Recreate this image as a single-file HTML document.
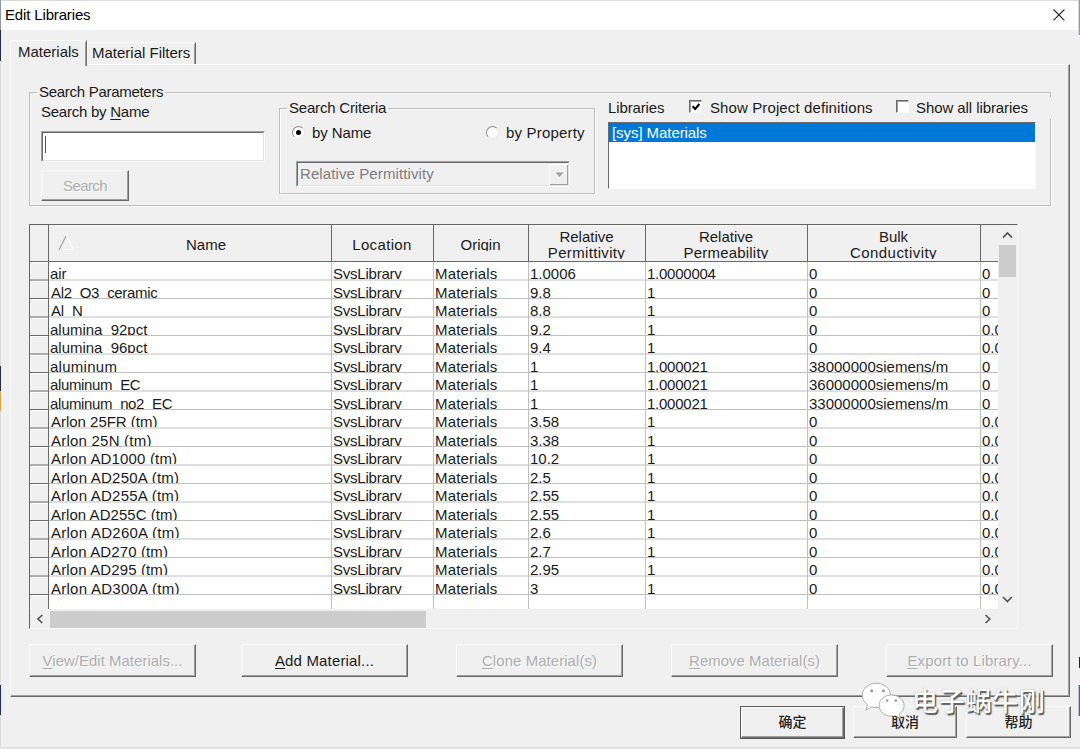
<!DOCTYPE html>
<html lang="en"><head><meta charset="utf-8"><title>Edit Libraries</title>
<style>
*{box-sizing:border-box;margin:0;padding:0}
html,body{width:1080px;height:749px;overflow:hidden;background:#f0f0f0}
body{position:relative;font-family:"Liberation Sans","Noto Sans CJK SC",sans-serif;font-size:15px;color:#1a1a1a;line-height:18px}
.abs,.t{position:absolute;white-space:nowrap}
.titlebar{position:absolute;left:0;top:0;width:1080px;height:30px;background:#fff;border-top:1px solid #d9d9d9}
.title{position:absolute;left:5px;top:5px;font-size:15px;color:#000}
.closex{position:absolute;left:1052px;top:7px}
.edge{position:absolute}
/* tab control */
.tabpanel{position:absolute;left:10px;top:64px;width:1060px;height:633px;border-left:1px solid #fff;border-top:1px solid #fff;border-right:1px solid #696969;border-bottom:1px solid #696969}
.tabpanel:after{content:"";position:absolute;left:0;top:0;right:0;bottom:0;border-right:1px solid #a0a0a0;border-bottom:1px solid #a0a0a0}
.tab{position:absolute;background:#f0f0f0;border-left:1px solid #fff;border-top:1px solid #fff;border-right:1px solid #696969;white-space:nowrap}
.tab i{position:absolute;right:0;top:1px;bottom:0;width:1px;background:#a0a0a0}
.tab1{left:10px;top:40px;width:77px;height:26px;z-index:2;padding:2px 0 0 7px}
.tab2{left:87px;top:42px;width:109px;height:22px;padding:1px 0 0 4px}
/* group boxes */
.group{position:absolute;border:1px solid #bdbdbd;box-shadow:1px 1px 0 #fbfbfb,inset 1px 1px 0 #fbfbfb}
.glabel{position:absolute;background:#f0f0f0;padding:0 2px;white-space:nowrap}
/* inputs */
.sunken{position:absolute;background:#fff;border-top:1px solid #a0a0a0;border-left:1px solid #a0a0a0;border-right:1px solid #fff;border-bottom:1px solid #fff}
.sunken:after{content:"";position:absolute;left:0;top:0;right:0;bottom:0;border-top:1px solid #696969;border-left:1px solid #696969;border-right:1px solid #e3e3e3;border-bottom:1px solid #e3e3e3}
.btn{position:absolute;background:#f0f0f0;border-top:1px solid #fff;border-left:1px solid #fff;border-right:1px solid #696969;border-bottom:1px solid #696969;text-align:center;white-space:nowrap}
.btn:after{content:"";position:absolute;left:0;top:0;right:0;bottom:0;border-right:1px solid #a0a0a0;border-bottom:1px solid #a0a0a0}
.btn span{position:relative;display:inline-block}
.btn.dis{color:#adadad;text-shadow:1px 1px 0 #fff}
u{text-decoration:underline;text-underline-offset:2px}
.radio{position:absolute;width:13px;height:13px;border-radius:50%;background:#fff;border:1px solid #8a8a8a;border-right-color:#e8e8e8;border-bottom-color:#e8e8e8}
.radio.on:after{content:"";position:absolute;left:3px;top:3px;width:5px;height:5px;border-radius:50%;background:#000}
.check{position:absolute;width:13px;height:13px;background:#fff;border-top:1px solid #696969;border-left:1px solid #696969;border-right:1px solid #fff;border-bottom:1px solid #fff;box-shadow:inset 1px 1px 0 #a0a0a0}
.listbox{position:absolute;background:#fff;border-top:1px solid #696969;border-left:1px solid #696969;border-right:1px solid #fff;border-bottom:1px solid #fff}
/* grid */
.grid{position:absolute;left:29px;top:224px;width:989px;height:405px;background:#fff;border-left:1px solid #646464;border-top:1px solid #646464;border-right:1px solid #fafafa;border-bottom:1px solid #fafafa;overflow:hidden}
.grid>*{position:absolute}
.ghead{left:0;top:0;width:968px;height:37px;background:#f0f0f0;border-bottom:1px solid #696969}

.hc{box-shadow:inset 1px 1px 0 #fff;top:0;height:36px;text-align:center;white-space:nowrap;overflow:hidden}
.hi{margin-top:11px;height:15px;line-height:18px;overflow:hidden}
.hc.two .hi{margin-top:4px;height:30px;line-height:16px}
.sorttri{left:28px;top:10px}
.row{left:0;width:968px;overflow:hidden}
.hl{left:0;width:968px}
.row>*{position:absolute}
.rh{left:0;top:0;width:18px;height:100%;background:#f0f0f0;box-shadow:inset 1px 1px 0 #fff}
.c{top:0;height:100%;overflow:hidden;white-space:nowrap}
.c span{position:absolute;left:2px;top:3px}
.vl{top:37px;width:1px;height:347px;background:#c0c0c0}
.vlh{top:0;width:1px;height:37px;background:#696969}
.defframe{position:absolute;border:1px solid #5a5a5a}
.btn.cjk{font-size:14px;font-weight:500;color:#222}
.wmtext{position:absolute;white-space:nowrap;font-size:26px;line-height:38px;color:#fff;font-family:"Liberation Sans","Noto Sans CJK SC",sans-serif;font-weight:500;text-shadow:1.5px 1.5px 1px #5e5e5e,0 0 1px #8a8a8a}

</style></head>
<body>
<div class="titlebar"><div class="title t" style="letter-spacing:-0.15px">Edit Libraries</div>
<svg class="closex" width="14" height="14" viewBox="0 0 14 14"><path d="M1.5 1.5 L12.4 12.4 M12.4 1.5 L1.5 12.4" stroke="#2a2a2a" stroke-width="1.15" fill="none"/></svg></div>
<div class="edge" style="left:0;top:0;width:1px;height:30px;background:#8f96a6"></div>
<div class="edge" style="left:0;top:30px;width:1px;height:31px;background:#262c47"></div>
<div class="edge" style="left:0;top:61px;width:1px;height:305px;background:#d9d9d9"></div>
<div class="edge" style="left:0;top:366px;width:1px;height:25px;background:#262c47"></div>
<div class="edge" style="left:0;top:391px;width:1px;height:20px;background:#e3a247"></div>
<div class="edge" style="left:0;top:411px;width:1px;height:274px;background:#d9d9d9"></div>
<div class="edge" style="left:0;top:685px;width:1px;height:30px;background:#262c47"></div>
<div class="edge" style="left:1px;top:685px;width:3px;height:30px;background:#e6edf6"></div>
<div class="edge" style="left:0;top:715px;width:1px;height:34px;background:#d9d9d9"></div>
<div class="edge" style="left:1078px;top:0;width:1px;height:35px;background:#d3d6dc"></div><div class="edge" style="left:1079px;top:0;width:1px;height:35px;background:#9198a8"></div>
<div class="edge" style="left:1079px;top:657px;width:1px;height:11px;background:#222"></div>
<div class="edge" style="left:1078px;top:685px;width:1px;height:31px;background:#b4bfd1"></div><div class="edge" style="left:1079px;top:685px;width:1px;height:31px;background:#4a648f"></div>
<div class="edge" style="left:0;top:747px;width:1080px;height:2px;background:#e2e2e2"></div>
<div class="tabpanel"></div>
<div class="tab tab1"><span>Materials</span><i></i></div>
<div class="tab tab2"><span>Material Filters</span><i></i></div>

<div class="group" style="left:29px;top:92px;width:1022px;height:114px"></div>
<div class="glabel" style="left:37px;top:83px"><span style="letter-spacing:-0.29px">Search Parameters</span></div>
<div class="t" style="left:41px;top:103px"><span style="letter-spacing:-0.25px">Search by <u>N</u>ame</span></div>
<div class="sunken" style="left:41px;top:131px;width:224px;height:31px"><div style="position:absolute;left:3px;top:4px;width:1px;height:17px;background:#555"></div></div>
<div class="btn dis" style="left:41px;top:170px;width:88px;height:31px;line-height:29px"><span style="letter-spacing:-0.6px">Search</span></div>

<div class="group" style="left:279px;top:108px;width:316px;height:86px"></div>
<div class="glabel" style="left:287px;top:99px"><span style="letter-spacing:-0.19px">Search Criteria</span></div>
<div class="radio on" style="left:292px;top:126px"></div>
<div class="t" style="left:312px;top:124px"><span style="letter-spacing:-0.1px">by Name</span></div>
<div class="radio" style="left:486px;top:126px"></div>
<div class="t" style="left:506px;top:124px"><span style="letter-spacing:0.19px">by Property</span></div>
<div class="sunken" style="left:296px;top:161px;width:274px;height:26px;background:#f0f0f0"><div class="t" style="left:3px;top:3px;color:#7e7e7e"><span style="letter-spacing:0.1px">Relative Permittivity</span></div>
<div class="btn" style="left:252px;top:2px;width:20px;height:22px"><svg style="position:absolute;left:5px;top:7px" width="9" height="6" viewBox="0 0 9 6"><path d="M0.5 0.5 L8.5 0.5 L4.5 5 Z" fill="#a0a0a0"/></svg></div></div>

<div class="t" style="left:608px;top:99px"><span style="letter-spacing:-0.13px">Libraries</span></div>
<div class="check" style="left:689px;top:100px"><svg width="11" height="11" viewBox="0 0 11 11" style="position:absolute;left:0;top:0"><path d="M2.6 5.2 L5.2 8 L9.4 3" stroke="#000" stroke-width="2" fill="none"/></svg></div>
<div class="t" style="left:710px;top:99px"><span style="letter-spacing:0.11px">Show Project definitions</span></div>
<div class="edge" style="left:1049px;top:97px;width:5px;height:22px;background:#f0f0f0"></div>
<div class="check" style="left:896px;top:100px"></div>
<div class="t" style="left:916px;top:99px"><span style="letter-spacing:-0.08px">Show all libraries</span></div>
<div class="listbox" style="left:608px;top:122px;width:428px;height:67px"><div style="position:absolute;left:0;top:0;right:0;height:19px;background:#0078d7;color:#fff;padding-left:3px;line-height:19px;white-space:nowrap"><span style="letter-spacing:-0.07px">[sys] Materials</span></div></div>
<div class="grid">
<div class="ghead"></div>
<div class="hc" style="left:18px;width:283px;padding-left:33px"><div class="hi">Name</div></div>
<div class="hc" style="left:301px;width:102px"><div class="hi"><b style="font-weight:400;letter-spacing:0.35px">Location</b></div></div>
<div class="hc" style="left:403px;width:95px"><div class="hi">Origin</div></div>
<div class="hc two" style="left:498px;width:117px"><div class="hi">Relative<br><b style="font-weight:400;letter-spacing:0.33px">Permittivity</b></div></div>
<div class="hc two" style="left:615px;width:162px"><div class="hi">Relative<br><b style="font-weight:400;letter-spacing:0.2px">Permeability</b></div></div>
<div class="hc two" style="left:777px;width:173px"><div class="hi">Bulk<br><b style="font-weight:400;letter-spacing:0.45px">Conductivity</b></div></div>
<svg class="sorttri" width="17" height="16" viewBox="0 0 17 16"><path d="M8 1 L15.5 14.5 L1.5 14.5" stroke="#ffffff" stroke-width="1.2" fill="none"/><path d="M1 15 L8 1" stroke="#8c8c8c" stroke-width="1" fill="none"/></svg>
<div class="row" style="top:37px;height:17px">
<div class="rh"></div>
<div class="c" style="left:18px;width:283px"><span><b style="font-weight:400;letter-spacing:-0.12px">air</b></span></div>
<div class="c" style="left:301px;width:102px"><span><b style="font-weight:400;letter-spacing:-0.22px">SysLibrary</b></span></div>
<div class="c" style="left:403px;width:95px"><span><b style="font-weight:400;letter-spacing:0.18px">Materials</b></span></div>
<div class="c" style="left:498px;width:117px"><span>1.0006</span></div>
<div class="c" style="left:615px;width:162px"><span><b style="font-weight:400;letter-spacing:-0.25px">1.0000004</b></span></div>
<div class="c" style="left:777px;width:173px"><span>0</span></div>
<div class="c" style="left:950px;width:18px"><span>0</span></div>
</div>
<div class="row" style="top:56px;height:17px">
<div class="rh"></div>
<div class="c" style="left:18px;width:283px"><span><b style="font-weight:400;margin-left:1px;letter-spacing:-0.32px">Al2_O3_ceramic</b></span></div>
<div class="c" style="left:301px;width:102px"><span><b style="font-weight:400;letter-spacing:-0.22px">SysLibrary</b></span></div>
<div class="c" style="left:403px;width:95px"><span><b style="font-weight:400;letter-spacing:0.18px">Materials</b></span></div>
<div class="c" style="left:498px;width:117px"><span>9.8</span></div>
<div class="c" style="left:615px;width:162px"><span>1</span></div>
<div class="c" style="left:777px;width:173px"><span>0</span></div>
<div class="c" style="left:950px;width:18px"><span>0</span></div>
</div>
<div class="row" style="top:74px;height:17px">
<div class="rh"></div>
<div class="c" style="left:18px;width:283px"><span><b style="font-weight:400;margin-left:1px;letter-spacing:-0.23px">Al_N</b></span></div>
<div class="c" style="left:301px;width:102px"><span><b style="font-weight:400;letter-spacing:-0.22px">SysLibrary</b></span></div>
<div class="c" style="left:403px;width:95px"><span><b style="font-weight:400;letter-spacing:0.18px">Materials</b></span></div>
<div class="c" style="left:498px;width:117px"><span>8.8</span></div>
<div class="c" style="left:615px;width:162px"><span>1</span></div>
<div class="c" style="left:777px;width:173px"><span>0</span></div>
<div class="c" style="left:950px;width:18px"><span>0</span></div>
</div>
<div class="row" style="top:93px;height:17px">
<div class="rh"></div>
<div class="c" style="left:18px;width:283px"><span><b style="font-weight:400;letter-spacing:-0.02px">alumina_92pct</b></span></div>
<div class="c" style="left:301px;width:102px"><span><b style="font-weight:400;letter-spacing:-0.22px">SysLibrary</b></span></div>
<div class="c" style="left:403px;width:95px"><span><b style="font-weight:400;letter-spacing:0.18px">Materials</b></span></div>
<div class="c" style="left:498px;width:117px"><span>9.2</span></div>
<div class="c" style="left:615px;width:162px"><span>1</span></div>
<div class="c" style="left:777px;width:173px"><span>0</span></div>
<div class="c" style="left:950px;width:18px"><span>0.0</span></div>
</div>
<div class="row" style="top:111px;height:17px">
<div class="rh"></div>
<div class="c" style="left:18px;width:283px"><span><b style="font-weight:400;letter-spacing:-0.02px">alumina_96pct</b></span></div>
<div class="c" style="left:301px;width:102px"><span><b style="font-weight:400;letter-spacing:-0.22px">SysLibrary</b></span></div>
<div class="c" style="left:403px;width:95px"><span><b style="font-weight:400;letter-spacing:0.18px">Materials</b></span></div>
<div class="c" style="left:498px;width:117px"><span>9.4</span></div>
<div class="c" style="left:615px;width:162px"><span>1</span></div>
<div class="c" style="left:777px;width:173px"><span>0</span></div>
<div class="c" style="left:950px;width:18px"><span>0.0</span></div>
</div>
<div class="row" style="top:130px;height:17px">
<div class="rh"></div>
<div class="c" style="left:18px;width:283px"><span><b style="font-weight:400;letter-spacing:0.27px">aluminum</b></span></div>
<div class="c" style="left:301px;width:102px"><span><b style="font-weight:400;letter-spacing:-0.22px">SysLibrary</b></span></div>
<div class="c" style="left:403px;width:95px"><span><b style="font-weight:400;letter-spacing:0.18px">Materials</b></span></div>
<div class="c" style="left:498px;width:117px"><span>1</span></div>
<div class="c" style="left:615px;width:162px"><span><b style="font-weight:400;letter-spacing:-0.25px">1.000021</b></span></div>
<div class="c" style="left:777px;width:173px"><span>38000000siemens/m</span></div>
<div class="c" style="left:950px;width:18px"><span>0</span></div>
</div>
<div class="row" style="top:148px;height:17px">
<div class="rh"></div>
<div class="c" style="left:18px;width:283px"><span><b style="font-weight:400;letter-spacing:-0.36px">aluminum_EC</b></span></div>
<div class="c" style="left:301px;width:102px"><span><b style="font-weight:400;letter-spacing:-0.22px">SysLibrary</b></span></div>
<div class="c" style="left:403px;width:95px"><span><b style="font-weight:400;letter-spacing:0.18px">Materials</b></span></div>
<div class="c" style="left:498px;width:117px"><span>1</span></div>
<div class="c" style="left:615px;width:162px"><span><b style="font-weight:400;letter-spacing:-0.25px">1.000021</b></span></div>
<div class="c" style="left:777px;width:173px"><span>36000000siemens/m</span></div>
<div class="c" style="left:950px;width:18px"><span>0</span></div>
</div>
<div class="row" style="top:167px;height:17px">
<div class="rh"></div>
<div class="c" style="left:18px;width:283px"><span><b style="font-weight:400;letter-spacing:-0.36px">aluminum_no2_EC</b></span></div>
<div class="c" style="left:301px;width:102px"><span><b style="font-weight:400;letter-spacing:-0.22px">SysLibrary</b></span></div>
<div class="c" style="left:403px;width:95px"><span><b style="font-weight:400;letter-spacing:0.18px">Materials</b></span></div>
<div class="c" style="left:498px;width:117px"><span>1</span></div>
<div class="c" style="left:615px;width:162px"><span><b style="font-weight:400;letter-spacing:-0.25px">1.000021</b></span></div>
<div class="c" style="left:777px;width:173px"><span>33000000siemens/m</span></div>
<div class="c" style="left:950px;width:18px"><span>0</span></div>
</div>
<div class="row" style="top:185px;height:17px">
<div class="rh"></div>
<div class="c" style="left:18px;width:283px"><span><b style="font-weight:400;margin-left:1px;letter-spacing:-0.02px">Arlon 25FR (tm)</b></span></div>
<div class="c" style="left:301px;width:102px"><span><b style="font-weight:400;letter-spacing:-0.22px">SysLibrary</b></span></div>
<div class="c" style="left:403px;width:95px"><span><b style="font-weight:400;letter-spacing:0.18px">Materials</b></span></div>
<div class="c" style="left:498px;width:117px"><span>3.58</span></div>
<div class="c" style="left:615px;width:162px"><span>1</span></div>
<div class="c" style="left:777px;width:173px"><span>0</span></div>
<div class="c" style="left:950px;width:18px"><span>0.0</span></div>
</div>
<div class="row" style="top:204px;height:17px">
<div class="rh"></div>
<div class="c" style="left:18px;width:283px"><span><b style="font-weight:400;margin-left:1px;letter-spacing:0.22px">Arlon 25N (tm)</b></span></div>
<div class="c" style="left:301px;width:102px"><span><b style="font-weight:400;letter-spacing:-0.22px">SysLibrary</b></span></div>
<div class="c" style="left:403px;width:95px"><span><b style="font-weight:400;letter-spacing:0.18px">Materials</b></span></div>
<div class="c" style="left:498px;width:117px"><span>3.38</span></div>
<div class="c" style="left:615px;width:162px"><span>1</span></div>
<div class="c" style="left:777px;width:173px"><span>0</span></div>
<div class="c" style="left:950px;width:18px"><span>0.0</span></div>
</div>
<div class="row" style="top:222px;height:17px">
<div class="rh"></div>
<div class="c" style="left:18px;width:283px"><span><b style="font-weight:400;margin-left:1px;letter-spacing:0.17px">Arlon AD1000 (tm)</b></span></div>
<div class="c" style="left:301px;width:102px"><span><b style="font-weight:400;letter-spacing:-0.22px">SysLibrary</b></span></div>
<div class="c" style="left:403px;width:95px"><span><b style="font-weight:400;letter-spacing:0.18px">Materials</b></span></div>
<div class="c" style="left:498px;width:117px"><span>10.2</span></div>
<div class="c" style="left:615px;width:162px"><span>1</span></div>
<div class="c" style="left:777px;width:173px"><span>0</span></div>
<div class="c" style="left:950px;width:18px"><span>0.0</span></div>
</div>
<div class="row" style="top:241px;height:17px">
<div class="rh"></div>
<div class="c" style="left:18px;width:283px"><span><b style="font-weight:400;margin-left:1px;letter-spacing:0.24px">Arlon AD250A (tm)</b></span></div>
<div class="c" style="left:301px;width:102px"><span><b style="font-weight:400;letter-spacing:-0.22px">SysLibrary</b></span></div>
<div class="c" style="left:403px;width:95px"><span><b style="font-weight:400;letter-spacing:0.18px">Materials</b></span></div>
<div class="c" style="left:498px;width:117px"><span>2.5</span></div>
<div class="c" style="left:615px;width:162px"><span>1</span></div>
<div class="c" style="left:777px;width:173px"><span>0</span></div>
<div class="c" style="left:950px;width:18px"><span>0.0</span></div>
</div>
<div class="row" style="top:259px;height:17px">
<div class="rh"></div>
<div class="c" style="left:18px;width:283px"><span><b style="font-weight:400;margin-left:1px;letter-spacing:0.24px">Arlon AD255A (tm)</b></span></div>
<div class="c" style="left:301px;width:102px"><span><b style="font-weight:400;letter-spacing:-0.22px">SysLibrary</b></span></div>
<div class="c" style="left:403px;width:95px"><span><b style="font-weight:400;letter-spacing:0.18px">Materials</b></span></div>
<div class="c" style="left:498px;width:117px"><span>2.55</span></div>
<div class="c" style="left:615px;width:162px"><span>1</span></div>
<div class="c" style="left:777px;width:173px"><span>0</span></div>
<div class="c" style="left:950px;width:18px"><span>0.0</span></div>
</div>
<div class="row" style="top:278px;height:17px">
<div class="rh"></div>
<div class="c" style="left:18px;width:283px"><span><b style="font-weight:400;margin-left:1px;letter-spacing:0.04px">Arlon AD255C (tm)</b></span></div>
<div class="c" style="left:301px;width:102px"><span><b style="font-weight:400;letter-spacing:-0.22px">SysLibrary</b></span></div>
<div class="c" style="left:403px;width:95px"><span><b style="font-weight:400;letter-spacing:0.18px">Materials</b></span></div>
<div class="c" style="left:498px;width:117px"><span>2.55</span></div>
<div class="c" style="left:615px;width:162px"><span>1</span></div>
<div class="c" style="left:777px;width:173px"><span>0</span></div>
<div class="c" style="left:950px;width:18px"><span>0.0</span></div>
</div>
<div class="row" style="top:296px;height:17px">
<div class="rh"></div>
<div class="c" style="left:18px;width:283px"><span><b style="font-weight:400;margin-left:1px;letter-spacing:0.26px">Arlon AD260A (tm)</b></span></div>
<div class="c" style="left:301px;width:102px"><span><b style="font-weight:400;letter-spacing:-0.22px">SysLibrary</b></span></div>
<div class="c" style="left:403px;width:95px"><span><b style="font-weight:400;letter-spacing:0.18px">Materials</b></span></div>
<div class="c" style="left:498px;width:117px"><span>2.6</span></div>
<div class="c" style="left:615px;width:162px"><span>1</span></div>
<div class="c" style="left:777px;width:173px"><span>0</span></div>
<div class="c" style="left:950px;width:18px"><span>0.0</span></div>
</div>
<div class="row" style="top:315px;height:17px">
<div class="rh"></div>
<div class="c" style="left:18px;width:283px"><span><b style="font-weight:400;margin-left:1px;letter-spacing:0.13px">Arlon AD270 (tm)</b></span></div>
<div class="c" style="left:301px;width:102px"><span><b style="font-weight:400;letter-spacing:-0.22px">SysLibrary</b></span></div>
<div class="c" style="left:403px;width:95px"><span><b style="font-weight:400;letter-spacing:0.18px">Materials</b></span></div>
<div class="c" style="left:498px;width:117px"><span>2.7</span></div>
<div class="c" style="left:615px;width:162px"><span>1</span></div>
<div class="c" style="left:777px;width:173px"><span>0</span></div>
<div class="c" style="left:950px;width:18px"><span>0.0</span></div>
</div>
<div class="row" style="top:333px;height:17px">
<div class="rh"></div>
<div class="c" style="left:18px;width:283px"><span><b style="font-weight:400;margin-left:1px;letter-spacing:0.13px">Arlon AD295 (tm)</b></span></div>
<div class="c" style="left:301px;width:102px"><span><b style="font-weight:400;letter-spacing:-0.22px">SysLibrary</b></span></div>
<div class="c" style="left:403px;width:95px"><span><b style="font-weight:400;letter-spacing:0.18px">Materials</b></span></div>
<div class="c" style="left:498px;width:117px"><span>2.95</span></div>
<div class="c" style="left:615px;width:162px"><span>1</span></div>
<div class="c" style="left:777px;width:173px"><span>0</span></div>
<div class="c" style="left:950px;width:18px"><span>0.0</span></div>
</div>
<div class="row" style="top:352px;height:17px">
<div class="rh"></div>
<div class="c" style="left:18px;width:283px"><span><b style="font-weight:400;margin-left:1px;letter-spacing:0.26px">Arlon AD300A (tm)</b></span></div>
<div class="c" style="left:301px;width:102px"><span><b style="font-weight:400;letter-spacing:-0.22px">SysLibrary</b></span></div>
<div class="c" style="left:403px;width:95px"><span><b style="font-weight:400;letter-spacing:0.18px">Materials</b></span></div>
<div class="c" style="left:498px;width:117px"><span>3</span></div>
<div class="c" style="left:615px;width:162px"><span>1</span></div>
<div class="c" style="left:777px;width:173px"><span>0</span></div>
<div class="c" style="left:950px;width:18px"><span>0.0</span></div>
</div>
<div class="rh" style="top:370px;height:14px;width:18px"></div>
<div class="hl" style="top:54px;height:2px;background:linear-gradient(90deg,#acacac 0,#acacac 18px,#dfdfdf 18px)"></div>
<div class="hl" style="top:73px;height:1px;background:linear-gradient(90deg,#696969 0,#696969 18px,#c0c0c0 18px)"></div>
<div class="hl" style="top:91px;height:2px;background:linear-gradient(90deg,#acacac 0,#acacac 18px,#dfdfdf 18px)"></div>
<div class="hl" style="top:110px;height:1px;background:linear-gradient(90deg,#696969 0,#696969 18px,#c0c0c0 18px)"></div>
<div class="hl" style="top:128px;height:2px;background:linear-gradient(90deg,#acacac 0,#acacac 18px,#dfdfdf 18px)"></div>
<div class="hl" style="top:147px;height:1px;background:linear-gradient(90deg,#696969 0,#696969 18px,#c0c0c0 18px)"></div>
<div class="hl" style="top:165px;height:2px;background:linear-gradient(90deg,#acacac 0,#acacac 18px,#dfdfdf 18px)"></div>
<div class="hl" style="top:184px;height:1px;background:linear-gradient(90deg,#696969 0,#696969 18px,#c0c0c0 18px)"></div>
<div class="hl" style="top:202px;height:2px;background:linear-gradient(90deg,#acacac 0,#acacac 18px,#dfdfdf 18px)"></div>
<div class="hl" style="top:221px;height:1px;background:linear-gradient(90deg,#696969 0,#696969 18px,#c0c0c0 18px)"></div>
<div class="hl" style="top:239px;height:2px;background:linear-gradient(90deg,#acacac 0,#acacac 18px,#dfdfdf 18px)"></div>
<div class="hl" style="top:258px;height:1px;background:linear-gradient(90deg,#696969 0,#696969 18px,#c0c0c0 18px)"></div>
<div class="hl" style="top:276px;height:2px;background:linear-gradient(90deg,#acacac 0,#acacac 18px,#dfdfdf 18px)"></div>
<div class="hl" style="top:295px;height:1px;background:linear-gradient(90deg,#696969 0,#696969 18px,#c0c0c0 18px)"></div>
<div class="hl" style="top:313px;height:2px;background:linear-gradient(90deg,#acacac 0,#acacac 18px,#dfdfdf 18px)"></div>
<div class="hl" style="top:332px;height:1px;background:linear-gradient(90deg,#696969 0,#696969 18px,#c0c0c0 18px)"></div>
<div class="hl" style="top:350px;height:2px;background:linear-gradient(90deg,#acacac 0,#acacac 18px,#dfdfdf 18px)"></div>
<div class="hl" style="top:369px;height:1px;background:linear-gradient(90deg,#696969 0,#696969 18px,#c0c0c0 18px)"></div>
<div class="vl" style="left:301px"></div>
<div class="vl" style="left:403px"></div>
<div class="vl" style="left:498px"></div>
<div class="vl" style="left:615px"></div>
<div class="vl" style="left:777px"></div>
<div class="vl" style="left:950px"></div>
<div class="vl" style="left:18px;background:#696969"></div>
<div class="vlh" style="left:18px"></div>
<div class="vlh" style="left:301px"></div>
<div class="vlh" style="left:403px"></div>
<div class="vlh" style="left:498px"></div>
<div class="vlh" style="left:615px"></div>
<div class="vlh" style="left:777px"></div>
<div class="vlh" style="left:950px"></div>
<div class="vsb" style="left:968px;top:0;width:19px;height:384px;background:#f0f0f0"></div>
<div style="left:969px;top:20px;width:17px;height:32px;background:#cdcdcd"></div>
<div class="hsb" style="left:0;top:384px;width:987px;height:19px;background:#f0f0f0"></div>
<div style="left:20px;top:386px;width:376px;height:17px;background:#cdcdcd"></div>
<svg style="left:0;top:0" width="987" height="403" viewBox="0 0 987 403"><g stroke="#555" stroke-width="1.7" fill="none"><path d="M973 12.7 L977.5 8 L982 12.7"/><path d="M973 372 L977.4 376.6 L981.8 372"/><path d="M955.5 390 L959.8 394 L955.5 398"/><path d="M12.3 390 L8 394 L12.3 398"/></g></svg>

</div>
<div class="btn dis" style="left:29px;top:644px;width:167px;height:33px;line-height:31px"><span><u>V</u>iew/Edit Materials...</span></div>
<div class="btn" style="left:241px;top:644px;width:167px;height:33px;line-height:31px"><span style="letter-spacing:0.16px"><u>A</u>dd Material...</span></div>
<div class="btn dis" style="left:456px;top:644px;width:167px;height:33px;line-height:31px"><span style="letter-spacing:0.05px"><u>C</u>lone Material(s)</span></div>
<div class="btn dis" style="left:671px;top:644px;width:167px;height:33px;line-height:31px"><span><u>R</u>emove Material(s)</span></div>
<div class="btn dis" style="left:886px;top:644px;width:167px;height:33px;line-height:31px"><span style="letter-spacing:0.14px"><u>E</u>xport to Library...</span></div>

<div class="defframe" style="left:740px;top:706px;width:105px;height:33px"></div>
<div class="btn cjk" style="left:741px;top:707px;width:103px;height:31px;line-height:29px"><span>确定</span></div>
<div class="btn cjk" style="left:853px;top:706px;width:104px;height:32px;line-height:31px"><span>取消</span></div>
<div class="btn cjk" style="left:966px;top:706px;width:105px;height:32px;line-height:31px"><span>帮助</span></div>

<svg class="wm" style="position:absolute;left:858px;top:678px" width="52" height="44" viewBox="858 678 52 44">
<g fill="#ffffff" stroke="#9a9a9a" stroke-width="0.8">
<path d="M876.3 683.2 C868.3 683.2 862.3 688.6 862.3 695.4 C862.3 699.2 864.3 702.6 867.6 704.8 L866 710.2 L871.8 706.9 C873.2 707.3 874.7 707.6 876.3 707.6 C884.3 707.6 890.3 702.2 890.3 695.4 C890.3 688.6 884.3 683.2 876.3 683.2 Z"/>
<path d="M891.6 695 C884.6 695 879.1 699.7 879.1 705.6 C879.1 711.5 884.6 716.2 891.6 716.2 C893 716.2 894.3 716 895.6 715.7 L900.6 718.6 L899.2 713.9 C902.2 712 904.1 709 904.1 705.6 C904.1 699.7 898.6 695 891.6 695 Z"/>
</g>
<g fill="#9a9a9a"><circle cx="871.7" cy="690.7" r="1.5"/><circle cx="883.4" cy="690.7" r="1.5"/><circle cx="887.2" cy="700.6" r="1.3"/><circle cx="895.8" cy="700.6" r="1.3"/></g>
</svg>
<div class="wmtext" style="left:912px;top:683px;letter-spacing:0.7px"><span>电子蜗牛刚</span></div>

</body></html>
